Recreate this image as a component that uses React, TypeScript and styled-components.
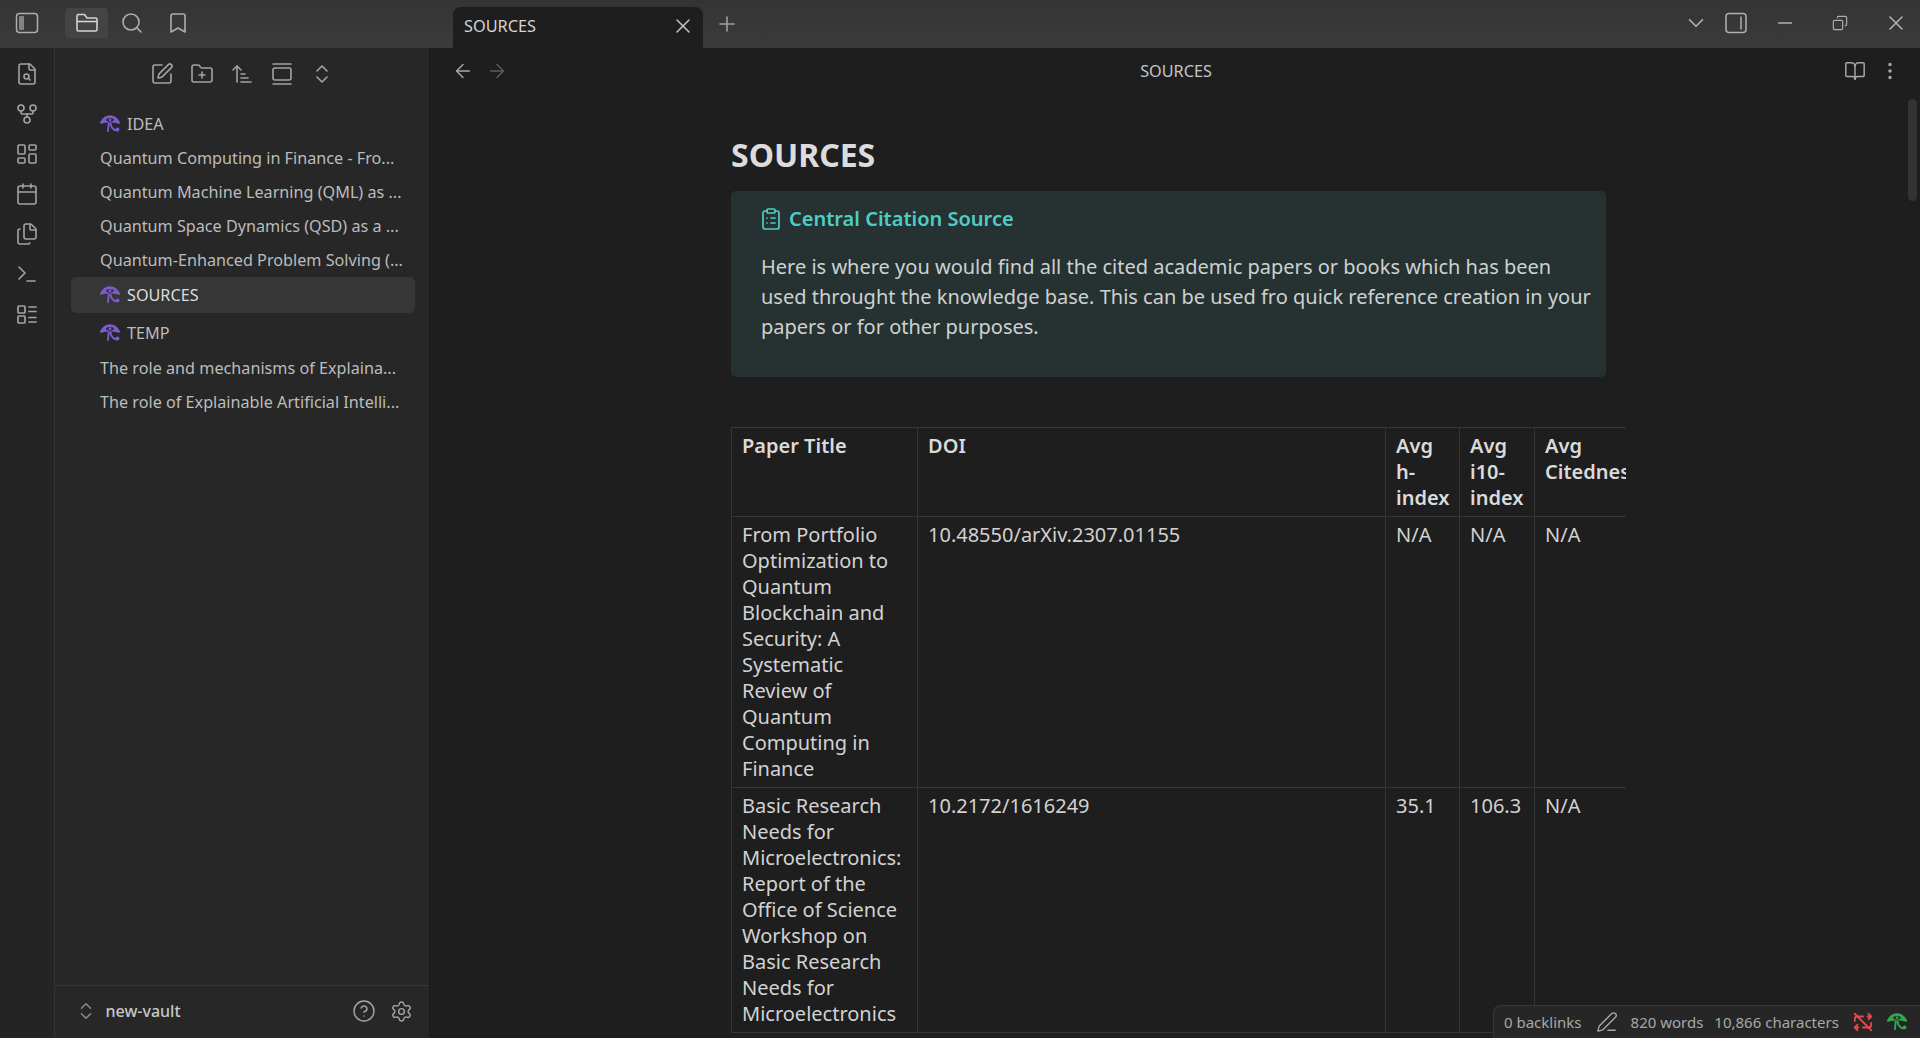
import React from "react";
import styled, { createGlobalStyle } from "styled-components";
import {
  Search, Bookmark, FileSearch, GitFork, LayoutDashboard, Calendar, Files, Terminal,
  SquarePen, FolderPlus, ArrowUpNarrowWide, GalleryVertical, ChevronsUpDown, X, Plus, ArrowLeft, ArrowRight,
  ChevronDown, Minus, BookOpen, EllipsisVertical, CircleHelp, Settings, PenLine, ClipboardList, Copy,
} from "lucide-react";

const Global = createGlobalStyle`
  html, body { margin: 0; padding: 0; height: 100%; background: #1e1e1e; overflow: hidden; }
  #root { height: 100%; }
  * { box-sizing: border-box; }
`;

const Shell = styled.div`
  position: relative; width: 100vw; height: 100vh; display: flex; flex-direction: column; overflow: hidden;
  font-family: "Noto Sans", "Open Sans", sans-serif; color: #dadada; background: #1e1e1e;
`;
const TitleBar = styled.div`
  flex: none; height: 48px; display: flex; align-items: flex-end;
  background: linear-gradient(#343434, #3b3b3b);
`;
const LeftTools = styled.div`
  flex: none; width: 453px; height: 48px; display: flex; align-items: center; padding-left: 15px;
`;
const ToolButton = styled.div<{ $active?: boolean; $w?: number }>`
  flex: none; width: ${(p) => p.$w ?? 46}px; height: 30px; margin-top: -3px; display: flex; align-items: center; justify-content: center;
  border-radius: 4px; color: ${(p) => (p.$active ? "#d4d4d4" : "#adadad")}; background: ${(p) => (p.$active ? "#444" : "transparent")};
`;
const Spacer = styled.div<{ $w: number }>`flex: none; width: ${(p) => p.$w}px;`;
const Tab = styled.div`
  flex: none; width: 250px; height: 41px; display: flex; align-items: center; justify-content: space-between;
  padding: 0 8px 4px 11px; background: #1e1e1e; border-radius: 8px 8px 0 0; font-size: 16.3px; color: #d4d4d4;
`;
const AddTab = styled.div`
  flex: none; width: 47px; height: 48px; display: flex; align-items: center; justify-content: center; color: #9e9e9e;
`;
const TitleFill = styled.div`flex: 1;`;
const RightTools = styled.div`
  flex: none; height: 48px; display: flex; align-items: center; color: #b0b0b0; padding-right: 9.5px;
`;
const WinButton = styled.div<{ $w: number }>`
  width: ${(p) => p.$w}px; display: flex; justify-content: center; margin-top: -3px;
`;
const Body = styled.div`flex: 1; min-height: 0; display: flex;`;
const Ribbon = styled.nav`
  flex: none; width: 55px; display: flex; flex-direction: column; align-items: center; gap: 16px;
  padding-top: 14px; padding-right: 1px; background: #242424; border-right: 1px solid #333; color: #a3a3a3;
`;
const Sidebar = styled.aside`
  flex: none; width: 375px; display: flex; flex-direction: column; background: #272727; border-right: 1px solid #1b1b1b;
`;
const FileTools = styled.div`
  flex: none; height: 50px; display: flex; align-items: center; justify-content: center; gap: 16px; color: #a3a3a3; padding-top: 1px;
`;
const Tree = styled.div`flex: 1; padding: 9px 14px 0 16px;`;
const FileRow = styled.div`
  height: 34px; display: flex; align-items: center; padding-left: 29px; font-size: 16.2px; color: #bcbcbc; white-space: nowrap;
`;
const FolderRow = styled.div<{ $active?: boolean; $h: number }>`
  height: ${(p) => p.$h}px; display: flex; align-items: center; gap: 7px; padding-left: 29px; border-radius: 5px; font-size: 16.2px;
  color: ${(p) => (p.$active ? "#dcdcdc" : "#bcbcbc")}; background: ${(p) => (p.$active ? "#363636" : "transparent")};
  margin-bottom: ${(p) => (p.$active ? 2 : 0)}px;
`;
const VaultBar = styled.div`
  flex: none; height: 53px; display: flex; align-items: center; border-top: 1px solid #363636; padding: 0 16.5px 2px 19.5px; color: #a3a3a3;
`;
const VaultName = styled.span`flex: 1; margin-left: 9px; font-size: 16px; font-weight: 500; color: #c8c8c8;`;
const VaultIcons = styled.div`display: flex; align-items: center; gap: 14px;`;
const Main = styled.main`flex: 1; min-width: 0; display: flex; flex-direction: column; background: #1e1e1e;`;
const ViewHeader = styled.header`
  flex: none; height: 45px; display: flex; align-items: center; justify-content: space-between; padding: 0 19px 0 22px; color: #a8a8a8;
`;
const NavIcons = styled.div`display: flex; gap: 12px;`;
const ViewTitle = styled.div`font-size: 16.2px; color: #c4c4c4;`;
const ViewActions = styled.div`display: flex; align-items: center; gap: 13px;`;
const Content = styled.article`flex: 1; min-height: 0; overflow: hidden; padding: 40px 0 0 301px;`;
const Heading = styled.h1`
  margin: 0 0 14px; font-size: 32px; line-height: 44px; font-weight: 700; color: #dcdcdc; height: 44px;
`;
const Callout = styled.section`
  width: 875px; height: 186px; background: #263232; border-radius: 5px; padding: 12.5px 12px 0 30px;
`;
const CalloutTitle = styled.div`
  display: flex; align-items: center; gap: 6px; height: 30px; font-size: 20px; font-weight: 600; color: #4ecdc4; margin-bottom: 18.5px;
  & > svg { flex: none; margin-left: -2px; }
`;
const CalloutText = styled.p`margin: 0; font-size: 20px; line-height: 30px; color: #cdd1d1;`;
const TableClip = styled.div`width: 895px; margin-top: 50px; overflow: hidden;`;
const Table = styled.table`
  width: 933px; table-layout: fixed; border-collapse: collapse; font-size: 20px; line-height: 26px;
`;
const Col = styled.col<{ $w: number }>`width: ${(p) => p.$w}px;`;
const Th = styled.th`
  border: 1px solid #363636; padding: 5px 10px; vertical-align: top; text-align: left; font-weight: 600; color: #dadada; height: 89px;
`;
const Td = styled.td`
  border: 1px solid #363636; padding: 5px 10px; vertical-align: top; color: #d2d2d2;
`;
const StatusBar = styled.footer`
  position: absolute; right: 0; bottom: 0; width: 427px; height: 33px; display: flex; align-items: center; padding-left: 10px;
  background: #262626; border: 1px solid #363636; border-width: 1px 0 0 1px; border-radius: 8px 0 0 0; font-size: 15px; color: #a8a8a8; white-space: nowrap;
`;
const StatusIcon = styled.span<{ $l: number; $r: number }>`
  display: flex; margin: 0 ${(p) => p.$r}px 0 ${(p) => p.$l}px;
`;
const StatusText = styled.span`margin-right: 11px;`;
const ScrollThumb = styled.div`
  position: absolute; right: 3px; top: 99px; width: 9px; height: 102px; border-radius: 5px; background: #333;
`;

const Horus = ({ color = "#7c5ccf", hole = "#272727" }: { color?: string; hole?: string }) => (
  <svg width="20" height="20" viewBox="0 0 24 24" fill="none" stroke={color} strokeWidth="2.3" strokeLinecap="round" strokeLinejoin="round">
    <path d="M1 10.5C4 4.5 8 2.5 12 2.5s8 2 11 8c-3-1-6-1.5-11-1.5S4 9.5 1 10.5z" fill={color} />
    <ellipse cx="12" cy="7" rx="4.6" ry="2.2" fill={hole} stroke="none" />
    <circle cx="12" cy="7" r="1.7" fill={color} stroke="none" />
    <path d="M10.5 11.5l-1 9" />
    <path d="M12.5 11.5c1 4 3.5 8 7 8" />
    <circle cx="21" cy="18.5" r="1.2" fill={color} />
  </svg>
);

const SyncOff = () => (
  <svg width="22" height="22" viewBox="0 0 24 24" fill="none" stroke="#e5484d" strokeWidth="2" strokeLinecap="round" strokeLinejoin="round">
    <path d="M3 3l18 18" />
    <path d="M3 11V9a3 3 0 0 1 3-3h6M17 6h4l-3-3M21 6l-3 3" />
    <path d="M21 13v2a3 3 0 0 1-3 3h-6M7 18H3l3 3M3 18l3-3" />
  </svg>
);

const Bullets = () => (
  <svg width="24" height="24" viewBox="0 0 24 24" fill="none" stroke="currentColor" strokeWidth="1.7" strokeLinecap="round" strokeLinejoin="round">
    <rect x="3" y="4" width="7" height="7" rx="1" />
    <rect x="3" y="14" width="7" height="7" rx="1" />
    <path d="M14 5h7M14 9.5h7M14 15.5h7M14 20h7" />
  </svg>
);

const PanelLeftIcon = () => (
  <svg width="24" height="24" viewBox="0 0 24 24" fill="none" stroke="currentColor" strokeWidth="1.5">
    <rect x="1.5" y="2.5" width="21" height="19" rx="3" />
    <rect x="4" y="5" width="5" height="14" rx="1" fill="currentColor" stroke="none" opacity="0.65" />
  </svg>
);
const PanelRightIcon = () => (
  <svg width="24" height="24" viewBox="0 0 24 24" fill="none" stroke="currentColor" strokeWidth="1.5" strokeLinecap="round">
    <rect x="2" y="2.5" width="20" height="19" rx="3" />
    <path d="M17 6v12" />
  </svg>
);
const FolderIcon = () => (
  <svg width="24" height="24" viewBox="0 0 24 24" fill="none" stroke="currentColor" strokeWidth="1.6" strokeLinejoin="round">
    <path d="M2 5a1.5 1.5 0 0 1 1.5-1.5h6L12 7h8.5A1.5 1.5 0 0 1 22 8.5v10a1.5 1.5 0 0 1-1.5 1.5h-17A1.5 1.5 0 0 1 2 18.5V5z" />
    <path d="M2 10.5h20" />
  </svg>
);

const RestoreIcon = styled(Copy)`transform: scaleX(-1);`;

const files1 = [
  "Quantum Computing in Finance - Fro...",
  "Quantum Machine Learning (QML) as ...",
  "Quantum Space Dynamics (QSD) as a ...",
  "Quantum-Enhanced Problem Solving (...",
];
const files2 = ["The role and mechanisms of Explaina...", "The role of Explainable Artificial Intelli..."];

export default function App() {
  return (
    <Shell>
      <Global />
      <TitleBar>
        <LeftTools>
          <ToolButton $w={24}><PanelLeftIcon /></ToolButton>
          <Spacer $w={26} />
          <ToolButton $active $w={43}><FolderIcon /></ToolButton>
          <Spacer $w={1} />
          <ToolButton><Search size={24} strokeWidth={1.6} /></ToolButton>
          <ToolButton><Bookmark size={24} strokeWidth={1.6} /></ToolButton>
        </LeftTools>
        <Tab>SOURCES<X size={24} strokeWidth={1.6} color="#bdbdbd" /></Tab>
        <AddTab><Plus size={24} strokeWidth={1.6} /></AddTab>
        <TitleFill />
        <RightTools>
          <WinButton $w={30}><ChevronDown size={26} strokeWidth={1.6} /></WinButton>
          <Spacer $w={9.5} />
          <WinButton $w={30}><PanelRightIcon /></WinButton>
          <Spacer $w={19} />
          <WinButton $w={30}><Minus size={22} strokeWidth={1.6} /></WinButton>
          <Spacer $w={25} />
          <WinButton $w={30}><RestoreIcon size={16} strokeWidth={1.7} /></WinButton>
          <Spacer $w={26} />
          <WinButton $w={30}><X size={24} strokeWidth={1.6} /></WinButton>
        </RightTools>
      </TitleBar>
      <Body>
        <Ribbon>
          <FileSearch size={24} strokeWidth={1.6} />
          <GitFork size={24} strokeWidth={1.6} />
          <LayoutDashboard size={24} strokeWidth={1.6} />
          <Calendar size={24} strokeWidth={1.6} />
          <Files size={24} strokeWidth={1.6} />
          <Terminal size={24} strokeWidth={1.6} />
          <Bullets />
        </Ribbon>
        <Sidebar>
          <FileTools>
            <SquarePen size={24} strokeWidth={1.6} />
            <FolderPlus size={24} strokeWidth={1.6} />
            <ArrowUpNarrowWide size={24} strokeWidth={1.6} />
            <GalleryVertical size={24} strokeWidth={1.6} />
            <ChevronsUpDown size={24} strokeWidth={1.6} />
          </FileTools>
          <Tree>
            <FolderRow $h={34}><Horus />IDEA</FolderRow>
            {files1.map((f) => <FileRow key={f}>{f}</FileRow>)}
            <FolderRow $h={36} $active><Horus hole="#363636" />SOURCES</FolderRow>
            <FolderRow $h={36}><Horus />TEMP</FolderRow>
            {files2.map((f) => <FileRow key={f}>{f}</FileRow>)}
          </Tree>
          <VaultBar>
            <ChevronsUpDown size={22} strokeWidth={1.6} color="#8c8c8c" />
            <VaultName>new-vault</VaultName>
            <VaultIcons>
              <CircleHelp size={24} strokeWidth={1.5} />
              <Settings size={23} strokeWidth={1.5} />
            </VaultIcons>
          </VaultBar>
        </Sidebar>
        <Main>
          <ViewHeader>
            <NavIcons>
              <ArrowLeft size={22} strokeWidth={1.6} color="#a8a8a8" />
              <ArrowRight size={22} strokeWidth={1.6} color="#5c5c5c" />
            </NavIcons>
            <ViewTitle>SOURCES</ViewTitle>
            <ViewActions>
              <BookOpen size={22} strokeWidth={1.6} />
              <EllipsisVertical size={22} strokeWidth={1.8} />
            </ViewActions>
          </ViewHeader>
          <Content>
            <Heading>SOURCES</Heading>
            <Callout>
              <CalloutTitle><ClipboardList size={24} strokeWidth={1.7} />Central Citation Source</CalloutTitle>
              <CalloutText>
                Here is where you would find all the cited academic papers or books which has been used throught the knowledge base. This can be used fro quick reference creation in your papers or for other purposes.
              </CalloutText>
            </Callout>
            <TableClip>
              <Table>
                <colgroup>
                  <Col $w={186} /><Col $w={468} /><Col $w={74} /><Col $w={75} /><Col $w={130} />
                </colgroup>
                <thead>
                  <tr><Th>Paper Title</Th><Th>DOI</Th><Th>Avg h-index</Th><Th>Avg i10-index</Th><Th>Avg Citedness</Th></tr>
                </thead>
                <tbody>
                  <tr>
                    <Td>From Portfolio Optimization to Quantum Blockchain and Security: A Systematic Review of Quantum Computing in Finance</Td>
                    <Td>10.48550/arXiv.2307.01155</Td><Td>N/A</Td><Td>N/A</Td><Td>N/A</Td>
                  </tr>
                  <tr>
                    <Td>Basic Research Needs for Microelectronics: Report of the Office of Science Workshop on Basic Research Needs for Microelectronics</Td>
                    <Td>10.2172/1616249</Td><Td>35.1</Td><Td>106.3</Td><Td>N/A</Td>
                  </tr>
                </tbody>
              </Table>
            </TableClip>
          </Content>
        </Main>
      </Body>
      <ScrollThumb />
      <StatusBar>
        <StatusText>0 backlinks</StatusText>
        <StatusIcon $l={3} $r={13}><PenLine size={22} strokeWidth={1.5} /></StatusIcon>
        <StatusText>820 words</StatusText>
        <span>10,866 characters</span>
        <StatusIcon $l={13} $r={13}><SyncOff /></StatusIcon>
        <StatusIcon $l={0} $r={0}><Horus color="#2fa84f" hole="#262626" /></StatusIcon>
      </StatusBar>
    </Shell>
  );
}
